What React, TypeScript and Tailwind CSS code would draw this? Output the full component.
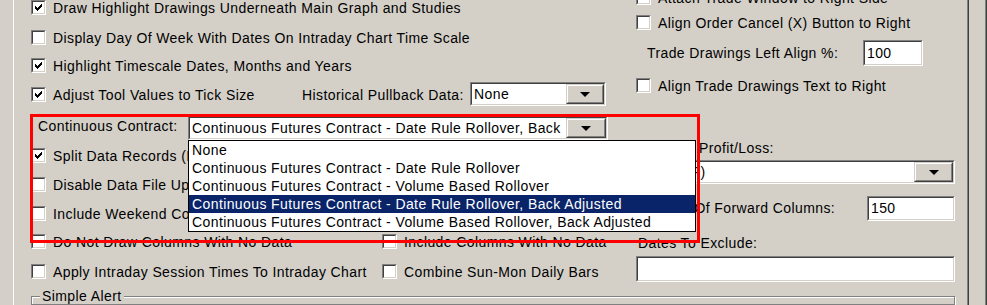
import React from 'react';

// classic 3D edges
const sunkenOuter = 'border border-t-[#808080] border-l-[#808080] border-b-white border-r-white';
const sunkenInner = 'border border-t-[#404040] border-l-[#404040] border-b-[#d4d0c8] border-r-[#d4d0c8]';

const Check = ({ checked }: { checked?: boolean }) => (
    <span className={`block w-[15px] h-[15px] shrink-0 ${sunkenOuter}`}>
        <span className={`flex items-center justify-center w-full h-full bg-white ${sunkenInner}`}>
            {checked && (
                <svg width="7" height="7" viewBox="0 0 7 7" shapeRendering="crispEdges">
                    <rect x="0" y="2" width="1" height="3" fill="#000" />
                    <rect x="1" y="3" width="1" height="3" fill="#000" />
                    <rect x="2" y="4" width="1" height="3" fill="#000" />
                    <rect x="3" y="3" width="1" height="3" fill="#000" />
                    <rect x="4" y="2" width="1" height="3" fill="#000" />
                    <rect x="5" y="1" width="1" height="3" fill="#000" />
                    <rect x="6" y="0" width="1" height="3" fill="#000" />
                </svg>
            )}
        </span>
    </span>
);

const CheckItem = ({ checked, label, className = '' }: { checked?: boolean; label: string; className?: string }) => (
    <div className={`flex items-center whitespace-nowrap ${className}`}>
        <Check checked={checked} />
        <span className="ml-[7px] mt-[2px]">{label}</span>
    </div>
);

const TextBox = ({ value, className = '' }: { value?: string; className?: string }) => (
    <div className={`${sunkenOuter} ${className}`}>
        <div className={`flex items-center h-full bg-white pl-[2px] ${sunkenInner}`}>{value}</div>
    </div>
);

const DropButton = ({ width }: { width: number }) => (
    <div
        className="h-full shrink-0 border border-t-[#d4d0c8] border-l-[#d4d0c8] border-b-[#404040] border-r-[#404040]"
        style={{ width }}
    >
        <div className="flex items-center justify-center h-full bg-[#d4d0c8] border border-t-white border-l-white border-b-[#808080] border-r-[#808080]">
            <svg width="10" height="5" viewBox="0 0 10 5">
                <polygon points="0,0 10,0 5,5" fill="#000" />
            </svg>
        </div>
    </div>
);

const Combo = ({ value, buttonWidth, className = '' }: { value: string; buttonWidth: number; className?: string }) => (
    <div className={`${sunkenOuter} ${className}`}>
        <div className={`flex items-center h-full bg-white ${sunkenInner}`}>
            <span className="flex-1 min-w-0 pl-[2px] mr-[3px] overflow-hidden whitespace-nowrap">{value}</span>
            <DropButton width={buttonWidth} />
        </div>
    </div>
);

const contractOptions = [
    'None',
    'Continuous Futures Contract - Date Rule Rollover',
    'Continuous Futures Contract - Volume Based Rollover',
    'Continuous Futures Contract - Date Rule Rollover, Back Adjusted',
    'Continuous Futures Contract - Volume Based Rollover, Back Adjusted',
];

export default function App() {
    const selected = 3;

    return (
        <div className="relative flex w-[987px] h-[305px] overflow-hidden bg-[#d4d0c8] text-[14px] tracking-[0.4px] text-black font-['Liberation_Sans',Arial,sans-serif]">
            <div className="w-[13px] shrink-0" />
            <div className="w-px shrink-0 bg-white" />

            {/* page content */}
            <div className="w-[953px] shrink-0 flex flex-col">
                <div className="flex h-[288px] items-start">
                    {/* left + middle */}
                    <div className="w-[622px] shrink-0 pl-[17px] -mt-[7px] flex flex-col">
                        <CheckItem checked label="Draw Highlight Drawings Underneath Main Graph and Studies" className="h-[29px]" />
                        <CheckItem label="Display Day Of Week With Dates On Intraday Chart Time Scale" className="h-[30px]" />
                        <CheckItem checked label="Highlight Timescale Dates, Months and Years" className="h-[27px]" />
                        <div className="flex items-center h-[30px] whitespace-nowrap">
                            <CheckItem checked label="Adjust Tool Values to Tick Size" className="w-[271px]" />
                            <span className="w-[168px] mt-[2px]">Historical Pullback Data:</span>
                            <Combo value="None" buttonWidth={38} className="w-[136px] h-[24px]" />
                        </div>
                        <div className="flex items-start h-[32px] pt-[7px] whitespace-nowrap">
                            <span className="w-[157px] pl-[7px] leading-[20px]">Continuous Contract:</span>
                            <Combo
                                value="Continuous Futures Contract - Date Rule Rollover, Back Adjusted"
                                buttonWidth={40}
                                className="w-[420px] h-[24px]"
                            />
                        </div>
                        <CheckItem checked label="Split Data Records (Intraday Files)" className="h-[28px]" />
                        <CheckItem label="Disable Data File Updates" className="h-[30px]" />
                        <CheckItem label="Include Weekend Columns" className="h-[28px]" />
                        <div className="flex items-center h-[28px]">
                            <CheckItem label="Do Not Draw Columns With No Data" className="w-[351px]" />
                            <CheckItem label="Include Columns With No Data" />
                        </div>
                        <div className="flex items-center h-[33px]">
                            <CheckItem label="Apply Intraday Session Times To Intraday Chart" className="w-[351px]" />
                            <CheckItem label="Combine Sun-Mon Daily Bars" />
                        </div>
                    </div>

                    {/* right column */}
                    <div className="w-[319px] shrink-0 -mt-[17px] flex flex-col whitespace-nowrap">
                        <CheckItem label="Attach Trade Window to Right Side" className="h-[28px]" />
                        <CheckItem label="Align Order Cancel (X) Button to Right" className="h-[23px]" />
                        <div className="flex items-center h-[38px]">
                            <span className="w-[227px] pl-[11px]">Trade Drawings Left Align %:</span>
                            <TextBox value="100" className="w-[60px] h-[26px]" />
                        </div>
                        <CheckItem label="Align Trade Drawings Text to Right" className="h-[26px]" />
                        <div className="h-[40px]" />
                        <div className="flex items-center h-[20px] pl-[10px]">Display Profit/Loss:</div>
                        <Combo value="Points (P)" buttonWidth={39} className="mt-[2px] w-[319px] h-[24px]" />
                        <div className="flex items-center h-[25px] mt-[12px]">
                            <span className="flex-1 pl-[2px]">Number Of Forward Columns:</span>
                            <TextBox value="150" className="w-[88px] h-[25px]" />
                        </div>
                        <div className="flex items-center h-[20px] mt-[12px] pl-[2px]">Dates To Exclude:</div>
                        <TextBox className="mt-[3px] w-[319px] h-[26px]" />
                    </div>
                </div>

                {/* Simple Alert group */}
                <fieldset className="ml-[17px] w-[924px] h-[40px] px-[8px] border border-[#808080] shadow-[inset_1px_1px_0_#fff,1px_1px_0_#fff]">
                    <legend className="px-[2px] bg-[#d4d0c8] leading-[16px]">Simple Alert</legend>
                </fieldset>
            </div>

            <div className="w-px shrink-0 bg-[#808080]" />
            <div className="w-px shrink-0 bg-[#404040]" />
            <div className="w-[16px] shrink-0" />
            <div className="w-px shrink-0 bg-[#808080]" />
            <div className="w-px shrink-0 bg-[#404040]" />

            {/* open dropdown list of the Continuous Contract combo */}
            <div className="absolute left-[188px] top-[140px] w-[508px] bg-white border border-black">
                {contractOptions.map((opt, i) => (
                    <div
                        key={opt}
                        className={`h-[18px] pl-[3px] flex items-center whitespace-nowrap ${
                            i === selected ? 'bg-[#0a246a] text-white' : ''
                        }`}
                    >
                        {opt}
                    </div>
                ))}
            </div>

            {/* red highlight frame */}
            <div className="absolute left-[30px] top-[114px] w-[670px] h-[129px] border-[3px] border-[#ff0000]" />
        </div>
    );
}
